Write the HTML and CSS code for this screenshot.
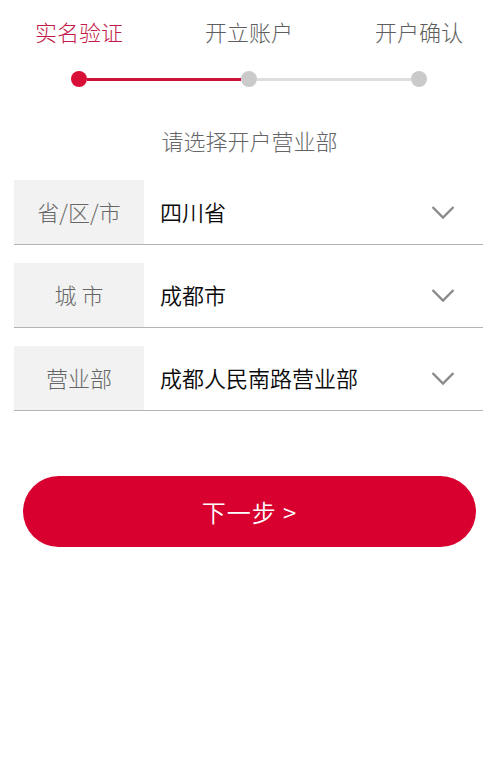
FILE: index.html
```html
<!DOCTYPE html>
<html lang="zh-CN">
<head>
<meta charset="utf-8">
<title>选择开户营业部</title>
<link rel="stylesheet" href="styles.css">
</head>
<body>
<div class="page">
  <div class="steps">
    <span class="step active">实名验证</span>
    <span class="step">开立账户</span>
    <span class="step">开户确认</span>
  </div>
  <div class="progress">
    <span class="dot on"></span>
    <span class="bar on"></span>
    <span class="dot"></span>
    <span class="bar"></span>
    <span class="dot"></span>
  </div>
  <div class="subtitle">请选择开户营业部</div>
  <div class="rows">
    <div class="row">
      <div class="label">省/区/市</div>
      <div class="value">四川省</div>
      <svg class="chev" width="24" height="15" viewBox="0 0 24 15"><path d="M1.5 2 L12 12.5 L22.5 2" fill="none" stroke="#8a8a8a" stroke-width="2.4"/></svg>
    </div>
    <div class="row">
      <div class="label">城&nbsp;市</div>
      <div class="value">成都市</div>
      <svg class="chev" width="24" height="15" viewBox="0 0 24 15"><path d="M1.5 2 L12 12.5 L22.5 2" fill="none" stroke="#8a8a8a" stroke-width="2.4"/></svg>
    </div>
    <div class="row">
      <div class="label">营业部</div>
      <div class="value">成都人民南路营业部</div>
      <svg class="chev" width="24" height="15" viewBox="0 0 24 15"><path d="M1.5 2 L12 12.5 L22.5 2" fill="none" stroke="#8a8a8a" stroke-width="2.4"/></svg>
    </div>
  </div>
  <button class="next">下一步 &gt;</button>
</div>
</body>
</html>
```

FILE: styles.css
```css
* { box-sizing: border-box; }
html, body { margin: 0; padding: 0; background: #fff; }
body {
  font-family: "Noto Sans CJK SC", "Noto Sans", sans-serif;
  width: 499px;
  height: 762px;
  overflow: hidden;
}
.page { display: flex; flex-direction: column; }
.steps {
  display: flex;
  justify-content: space-between;
  padding: 15px 36px 0 35px;
}
.step {
  font-size: 22px;
  line-height: 32px;
  font-weight: 300;
  color: #5e5e5e;
}
.step.active { color: #c21a4a; }
.progress {
  display: flex;
  align-items: center;
  margin: 24px 0 0 71px;
  height: 16px;
}
.dot {
  width: 16px;
  height: 16px;
  border-radius: 50%;
  background: #cacaca;
  flex: none;
}
.dot.on { background: #d80f36; }
.bar {
  width: 154px;
  height: 3px;
  background: #dedede;
  flex: none;
}
.bar.on { background: #cf1239; }
.subtitle {
  margin-top: 37px;
  text-align: center;
  font-size: 22px;
  line-height: 32px;
  font-weight: 300;
  color: #666;
}
.rows {
  display: flex;
  flex-direction: column;
  gap: 18px;
  margin: 24px 16px 0 14px;
}
.row {
  display: flex;
  align-items: center;
  height: 65px;
  border-bottom: 1.5px solid #b4b4b4;
}
.label {
  width: 130px;
  height: 100%;
  background: #f2f2f2;
  display: flex;
  align-items: center;
  justify-content: center;
  font-size: 22px;
  font-weight: 300;
  color: #666;
  padding-bottom: 2px;
}
.value {
  flex: 1;
  padding-left: 16px;
  padding-bottom: 2px;
  font-size: 22px;
  font-weight: 350;
  color: #0a0a0a;
}
.chev { margin-right: 28px; flex: none; }
.next {
  margin: 65px 23px 0 23px;
  height: 71px;
  border: none;
  border-radius: 36px;
  background: #d7002f;
  color: #fff;
  font-family: "Noto Sans CJK SC", "Noto Sans", sans-serif;
  font-size: 24px;
  font-weight: 350;
  letter-spacing: 1px;
  padding: 0;
}
```
